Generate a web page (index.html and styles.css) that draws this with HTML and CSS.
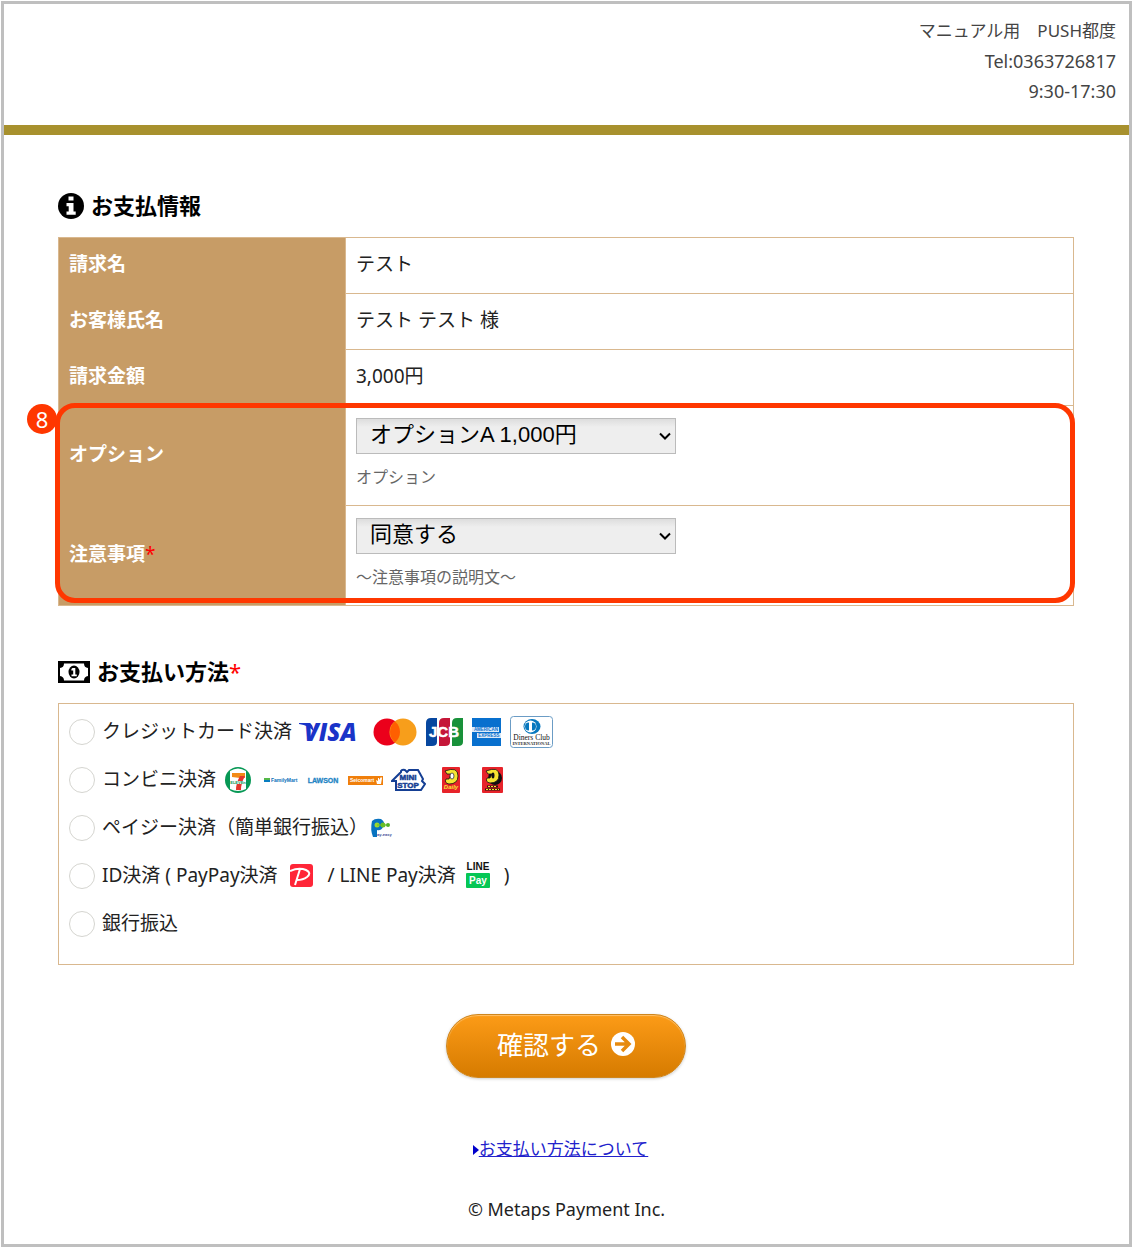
FILE: index.html
```html
<!DOCTYPE html>
<html lang="ja">
<head>
  <meta charset="UTF-8">
  <title>お支払情報</title>
  <meta name="viewport" content="width=device-width, initial-scale=1.0">
  <link rel="stylesheet" href="styles.css">
</head>
<body>
  <div class="page">
    <header class="header">
      <p>マニュアル用　PUSH都度</p>
      <p class="latin">Tel:0363726817</p>
      <p class="latin">9:30-17:30</p>
    </header>

    <form class="content">
      <h2>
        <svg width="26" height="26" viewBox="0 0 26 26" aria-hidden="true">
          <circle cx="13" cy="13" r="13" fill="#000"/>
          <path d="M10.500 3.500h5v4h-5zM8.500 10h7v8.500h2.200v3.200H8.500v-3.200h2.200v-5.300H8.500z" fill="#fff"/>
        </svg>
        <span>お支払情報</span>
      </h2>

      <div class="info">
        <table>
          <tr>
            <th scope="row">請求名</th>
            <td>テスト</td>
          </tr>
          <tr>
            <th scope="row">お客様氏名</th>
            <td>テスト テスト 様</td>
          </tr>
          <tr>
            <th scope="row">請求金額</th>
            <td>3,000円</td>
          </tr>
          <tr class="option-row">
            <th scope="row"><label for="option">オプション</label></th>
            <td>
              <span class="select">
                <select id="option" name="option">
                  <option>オプションA 1,000円</option>
                </select>
                <svg width="12" height="8" viewBox="0 0 12 8" aria-hidden="true"><path d="M1 1.500l5 5 5-5" fill="none" stroke="#000" stroke-width="2"/></svg>
              </span>
              <p class="note">オプション</p>
            </td>
          </tr>
          <tr class="option-row">
            <th scope="row"><label for="agree">注意事項<span class="required">*</span></label></th>
            <td>
              <span class="select">
                <select id="agree" name="agree">
                  <option>同意する</option>
                </select>
                <svg width="12" height="8" viewBox="0 0 12 8" aria-hidden="true"><path d="M1 1.500l5 5 5-5" fill="none" stroke="#000" stroke-width="2"/></svg>
              </span>
              <p class="note">～注意事項の説明文～</p>
            </td>
          </tr>
        </table>
        <div class="highlight"><span class="badge">8</span></div>
      </div>

      <h2>
        <svg width="32" height="22" viewBox="0 0 32 22" aria-hidden="true">
          <rect width="32" height="22" fill="#000"/>
          <path d="M6 2.500h20q0 4 4 4.500v8q-4 .5-4 4.500H6q0-4-4-4.500V7q4-.5 4-4.500z" fill="#fff"/>
          <ellipse cx="16" cy="11" rx="5.500" ry="6.500" fill="#000"/>
          <path d="M14.500 7h2.800v6.500h1.500v1.800h-5.300v-1.800h1.700V9.500h-1.800V8z" fill="#fff"/>
        </svg>
        <span>お支払い方法<span class="required">*</span></span>
      </h2>

      <ul class="methods">
        <li>
          <input type="radio" name="method" id="credit">
          <label for="credit">クレジットカード決済</label>
          <span class="logos cards">
            <svg width="60" height="36" viewBox="0 -7 60 36" role="img" aria-label="VISA">
              <path d="M1 2h9q4 0 5 5l1 4Q11 4 1 3z" fill="#1a34c8"/>
              <text x="6" y="20" font-family="Open Sans, sans-serif" font-size="24" font-weight="800" font-style="italic" fill="#1a34c8">VISA</text>
            </svg>
            <svg width="44" height="28" viewBox="0 0 44 28" role="img" aria-label="Mastercard">
              <circle cx="14" cy="14" r="13.500" fill="#eb001b"/>
              <circle cx="30" cy="14" r="13.500" fill="#f79e1b"/>
              <path d="M22 3.500a13.500 13.500 0 0 1 0 21 13.500 13.500 0 0 1 0-21z" fill="#ff5f00"/>
            </svg>
            <svg width="37" height="28" viewBox="0 0 37 28" role="img" aria-label="JCB">
              <path d="M5 0h6v24q0 4-5 4H0V5q0-5 5-5z" fill="#07479f"/>
              <path d="M18 0h6v24q0 4-5 4h-6V5q0-5 5-5z" fill="#c51638"/>
              <path d="M31 0h6v24q0 4-5 4h-6V5q0-5 5-5z" fill="#18913a"/>
              <text x="18" y="19" font-size="15" font-weight="bold" text-anchor="middle" fill="#fff" stroke="#fff" stroke-width=".5">JCB</text>
            </svg>
            <svg width="29" height="28" viewBox="0 0 29 28" role="img" aria-label="American Express">
              <rect width="29" height="28" fill="#0870ce"/>
              <rect y="9" width="27" height="5" fill="#dceaf7"/>
              <rect x="5" y="15" width="24" height="5" fill="#dceaf7"/>
              <text x="14" y="13" font-size="4.500" font-weight="bold" text-anchor="middle" fill="#0870ce">AMERICAN</text>
              <text x="17" y="19" font-size="4.500" font-weight="bold" text-anchor="middle" fill="#0870ce">EXPRESS</text>
            </svg>
            <svg width="43" height="32" viewBox="0 0 43 32" role="img" aria-label="Diners Club">
              <rect x=".5" y=".5" width="42" height="31" rx="3" fill="#fff" stroke="#6b9cc5"/>
              <ellipse cx="22" cy="10.500" rx="8.500" ry="7.500" fill="#0878be"/>
              <circle cx="20.500" cy="10.500" r="6" fill="#fff"/>
              <path d="M19 6.500v8a4 4 0 0 1 0-8zM22 6.500a4 4 0 0 1 0 8z" fill="#0878be"/>
              <text x="21.500" y="24" font-family="Liberation Serif, serif" font-size="7.500" text-anchor="middle" fill="#111">Diners Club</text>
              <text x="21.500" y="29" font-family="Liberation Serif, serif" font-size="4.500" font-weight="bold" text-anchor="middle" fill="#333">INTERNATIONAL</text>
            </svg>
          </span>
        </li>
        <li>
          <input type="radio" name="method" id="store">
          <label for="store">コンビニ決済</label>
          <span class="logos stores">
            <svg width="26" height="26" viewBox="0 0 26 26" role="img" aria-label="セブンイレブン">
              <circle cx="13" cy="13" r="13" fill="#079855"/>
              <path d="M5 4q8-5 16 0v18q-8 4-16 0z" fill="#fff"/>
              <path d="M7 6h13v5h-5l-8-1z" fill="#f28b18"/>
              <path d="M15 9h5q-4 7-4 14h-5q0-7 4-14z" fill="#e3372d"/>
              <path d="M6 14h14v3H6z" fill="#fff"/>
              <text x="13" y="17" font-size="4" font-weight="bold" text-anchor="middle" fill="#079855">ELEVEn</text>
            </svg>
            <svg width="34" height="8" viewBox="0 0 34 8" role="img" aria-label="FamilyMart">
              <rect y="2" width="6" height="2" fill="#55b848"/>
              <rect y="4" width="6" height="2" fill="#087dc0"/>
              <text x="7" y="6" font-size="5" font-weight="bold" fill="#096fb8">FamilyMart</text>
            </svg>
            <svg width="34" height="8" viewBox="0 0 34 8" role="img" aria-label="LAWSON">
              <text x="17" y="7" font-size="7" font-weight="bold" text-anchor="middle" fill="#2384c4" stroke="#2384c4" stroke-width=".3">LAWSON</text>
            </svg>
            <svg width="35" height="9" viewBox="0 0 35 9" role="img" aria-label="Seicomart">
              <rect width="35" height="9" fill="#f07f0b"/>
              <text x="2" y="6" font-size="5" font-weight="bold" fill="#fff">Seicomart</text>
              <path d="M28 4l2 1V2h1v2l2-3 1 1-1 6h-4z" fill="#fff"/>
            </svg>
            <svg width="35" height="24" viewBox="0 0 35 24" role="img" aria-label="MINISTOP">
              <path d="M5 22V13H1l9-9V3q1-2 4-1l2 2 2-2h9l5 9-1 2 3 3-4 6z" fill="#fff" stroke="#153f94" stroke-width="2"/>
              <text x="17" y="12" font-size="8" font-weight="bold" text-anchor="middle" fill="#153f94" stroke="#153f94" stroke-width=".5">MINI</text>
              <text x="17" y="20" font-size="8" font-weight="bold" text-anchor="middle" fill="#153f94" stroke="#153f94" stroke-width=".5">STOP</text>
            </svg>
            <svg class="daily" width="18" height="26" viewBox="0 0 18 26" role="img" aria-label="デイリーヤマザキ">
              <rect width="18" height="26" rx="1" fill="#e7232a"/>
              <path d="M3 4q13-5 13 5 0 8-9 8-5-1-3-5h3l2-5H5z" fill="#f6e431" stroke="#111" stroke-width=".8"/>
              <ellipse cx="10" cy="9" rx="2" ry="3" fill="#fff" stroke="#333" stroke-width=".8"/>
              <text x="9" y="22" font-size="6" font-weight="bold" font-style="italic" text-anchor="middle" fill="#f6e431">Daily</text>
            </svg>
            <svg class="yamazaki" width="21" height="26" viewBox="0 0 21 26" role="img" aria-label="ヤマザキデイリーストアー">
              <rect width="21" height="26" rx="1" fill="#e7232a"/>
              <circle cx="13" cy="11" r="7" fill="#111"/>
              <path d="M4 4q13-5 13 4 0 8-9 8-5-1-3-5h3l2-4H6z" fill="#f6e431" stroke="#111" stroke-width=".8"/>
              <ellipse cx="11" cy="8.500" rx="1.500" ry="3" fill="#111"/>
              <path d="M5 19.500h11M3 22.500h15" stroke="#24180a" stroke-width="2"/>
              <path d="M6 19.500h9M4 22.500h13" stroke="#f6e431" stroke-dasharray="2 1"/>
            </svg>
          </span>
        </li>
        <li>
          <input type="radio" name="method" id="payeasy">
          <label for="payeasy">ペイジー決済（簡単銀行振込）</label>
          <span class="logos payeasy">
            <svg width="24" height="20" viewBox="0 0 24 20" role="img" aria-label="Pay-easy">
              <path d="M2 3Q5 0 11 1q5 3 2 8-2 4-6 3v7H3q-3-7-1-16z" fill="#0873c0"/>
              <circle cx="7" cy="7" r="2.500" fill="#9fd82d"/>
              <path d="M7 7h11" stroke="#69bf27"/>
              <circle cx="13" cy="7" r="2.500" fill="#69bf27"/>
              <circle cx="18" cy="7" r="2" fill="#54b329"/>
              <text x="7" y="18" font-size="4" font-weight="bold" fill="#3c4a96">ay-easy</text>
            </svg>
          </span>
        </li>
        <li>
          <input type="radio" name="method" id="idpay">
          <label for="idpay" class="id-label">
            <span>ID決済 ( PayPay決済</span>
            <svg class="paypay" width="23" height="23" viewBox="0 0 23 23" role="img" aria-label="PayPay">
              <rect width="23" height="23" rx="3" fill="#ff2638"/>
              <path d="M0 7q9-4 16-1 6 3 1 7-4 3-10 3M10 5L5 21" fill="none" stroke="#fff" stroke-width="2"/>
            </svg>
            <span>/ LINE Pay決済</span>
            <svg class="line" width="24" height="26" viewBox="0 0 24 26" role="img" aria-label="LINE Pay">
              <text x="12" y="8" font-size="10" font-weight="bold" text-anchor="middle" fill="#111">LINE</text>
              <rect y="11" width="24" height="15" rx="1" fill="#06c755"/>
              <text x="12" y="22" font-size="10" font-weight="bold" text-anchor="middle" fill="#fff">Pay</text>
            </svg>
            <span>)</span>
          </label>
        </li>
        <li>
          <input type="radio" name="method" id="bank">
          <label for="bank">銀行振込</label>
        </li>
      </ul>

      <button type="submit">
        確認する
        <svg width="24" height="24" viewBox="0 0 24 24" aria-hidden="true">
          <circle cx="12" cy="12" r="12" fill="#fff"/>
          <path d="M4 12h13M11 5l7 7-7 7" fill="none" stroke="#e68a0e" stroke-width="3.500"/>
        </svg>
      </button>
    </form>

    <footer>
      <p class="about"><a href="#">お支払い方法について</a></p>
      <p class="latin">© Metaps Payment Inc.</p>
    </footer>
  </div>
</body>
</html>
```
FILE: styles.css
```css
* {
  margin: 0;
  padding: 0;
  box-sizing: border-box;
}

body {
  padding: 1px;
  background: #fff;
  color: #222;
  font-family: "Noto Sans", "Noto Sans CJK JP", sans-serif;
  font-size: 19px;
  line-height: 30px;
}

svg {
  display: block;
  flex: none;
  font-family: "Liberation Sans", sans-serif;
}

.page {
  border: 3px solid #bfbfbf;
}

.header {
  padding: 12px 13px 19px;
  border-bottom: 10px solid #a8912e;
  text-align: right;
  font-size: 17px;
  color: #444;
}

.latin {
  font-size: 18px;
}

.content {
  padding: 56px 55px 0 54px;
}

h2 {
  display: flex;
  align-items: center;
  gap: 7px;
  margin-bottom: 16px;
  color: #000;
  font-size: 22px;
}

h2 span {
  padding-bottom: 2px;
  line-height: 28px;
}

.required {
  color: #f00;
  font-weight: normal;
}

.info {
  position: relative;
  margin-bottom: 51px;
}

table {
  width: 100%;
  border-collapse: collapse;
  border: 1px solid #d9b88f;
}

th,
td {
  padding: 11px 10px 14px;
  text-align: left;
}

th {
  width: 287px;
  background: #c79c66;
  color: #fff;
}

td {
  border: 1px solid #d9b88f;
}

.option-row td {
  padding: 12px 10px 13px;
}

.select {
  position: relative;
  display: block;
  width: 320px;
}

.select svg {
  position: absolute;
  top: 14px;
  right: 5px;
  pointer-events: none;
}

select {
  display: block;
  appearance: none;
  width: 100%;
  height: 36px;
  padding: 0 24px 3px 13px;
  border: 1px solid #bbb;
  border-radius: 0;
  background: linear-gradient(#ddd, #eee 8px);
  color: #000;
  font-family: "Liberation Sans", "Noto Sans CJK JP", sans-serif;
  font-size: 22px;
}

.note {
  margin-top: 8px;
  color: #666;
  font-size: 16px;
}

/* 入力項目の強調枠 */
.highlight {
  position: absolute;
  right: -1px;
  bottom: 3px;
  left: -3px;
  height: 200px;
  border: 5px solid #ff3700;
  border-radius: 20px;
  pointer-events: none;
}

.badge {
  position: absolute;
  top: -4px;
  left: -33px;
  width: 30px;
  height: 30px;
  border-radius: 50%;
  background: #ff3700;
  color: #fff;
  font-size: 22px;
  text-align: center;
}

.methods {
  padding: 4px 10px 16px;
  border: 1px solid #d9b88f;
  list-style: none;
}

.methods li {
  display: flex;
  align-items: center;
  min-height: 48px;
}

.methods label {
  padding-bottom: 2px;
}

.methods input {
  appearance: none;
  flex: none;
  width: 26px;
  height: 26px;
  margin-right: 7px;
  border: 1px solid #d5d5d0;
  border-radius: 50%;
  background: #fff;
}

.methods input:checked {
  border: 8px solid #e68a0e;
}

.logos {
  display: flex;
  align-items: center;
}

.cards {
  gap: 9px;
  margin-left: 6px;
}

.cards svg:first-child {
  margin-right: 6px;
}

.stores {
  gap: 8px;
  margin-left: 9px;
}

.stores svg:first-child {
  margin-right: 5px;
}

.daily {
  margin: 0 6px 0 8px;
}

.yamazaki {
  margin-left: 8px;
}

.payeasy {
  margin-left: 2px;
}

.id-label {
  display: flex;
  align-items: center;
}

.paypay {
  margin: 0 15px 0 12px;
}

.line {
  margin: 0 14px 0 10px;
}

button {
  display: flex;
  align-items: center;
  justify-content: center;
  gap: 10px;
  width: 240px;
  height: 64px;
  margin: 49px auto 0;
  padding-bottom: 4px;
  border: 1px solid #cf861d;
  border-radius: 32px;
  background: linear-gradient(#fc9b17, #d67b00);
  box-shadow: inset 0 1px 1px #ffc16b, 0 1px 3px #ccc;
  color: #fff;
  font-family: inherit;
  font-size: 26px;
  cursor: pointer;
}

footer {
  padding: 56px 0 20px;
  text-align: center;
}

.about {
  margin-bottom: 30px;
  padding-right: 12px;
  font-size: 17px;
}

.about::before {
  content: "";
  display: inline-block;
  border-top: 5px solid transparent;
  border-bottom: 5px solid transparent;
  border-left: 6px solid #00c;
}

a {
  color: #22c;
}
```
